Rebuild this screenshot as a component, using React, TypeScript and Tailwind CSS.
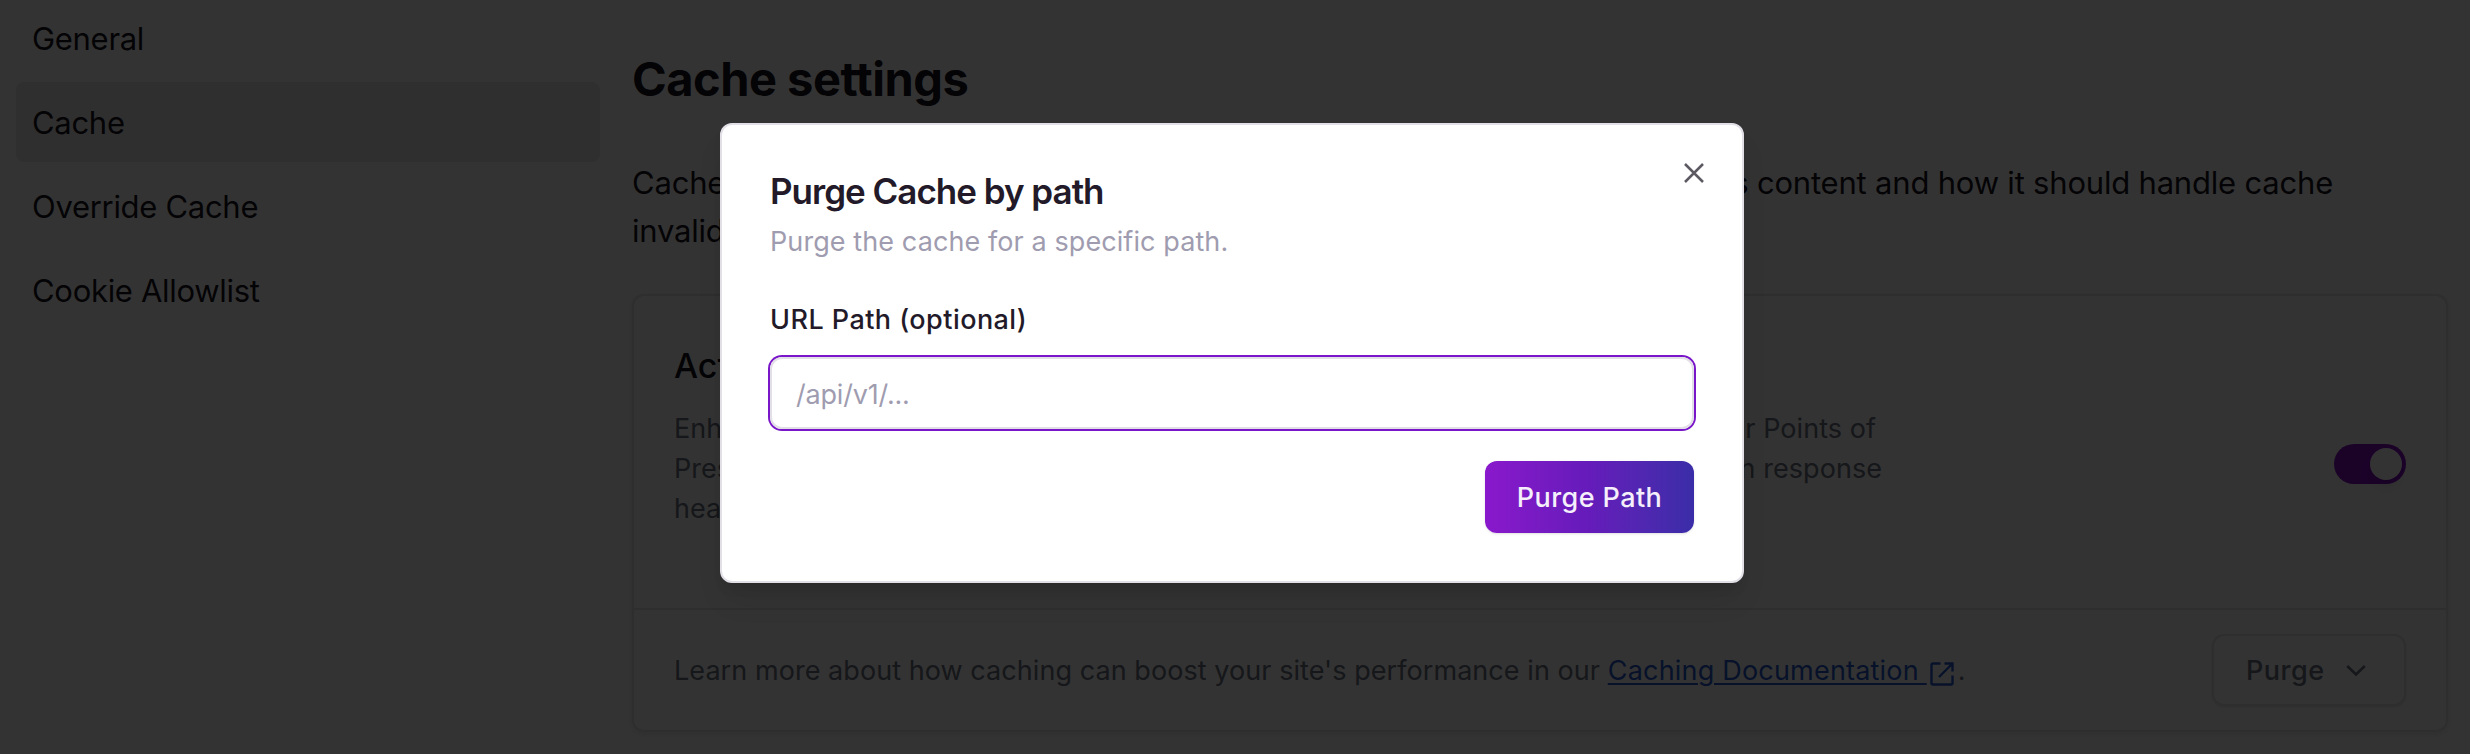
import React from "react";

const navItems = [
  { label: "General", active: false },
  { label: "Cache", active: true },
  { label: "Override Cache", active: false },
  { label: "Cookie Allowlist", active: false },
];

function Sidebar() {
  return (
    <nav className="-mt-0.5 flex w-[584px] shrink-0 flex-col gap-1 tracking-[-0.3px]">
      {navItems.map((item) => (
        <a
          key={item.label}
          className={
            item.active
              ? "flex h-20 items-center rounded-lg bg-[#ebebeb] px-4 pt-[3px]"
              : "flex h-20 items-center rounded-lg px-4 pt-[3px]"
          }
        >
          {item.label}
        </a>
      ))}
    </nav>
  );
}

function SplitLine({ start, end }: { start: string; end: string }) {
  return (
    <span className="flex justify-between whitespace-nowrap">
      <span>{start}</span>
      <span>{end}</span>
    </span>
  );
}

function ExternalIcon() {
  return (
    <svg className="mt-1 ml-[3px] size-6" viewBox="0 0 24 24" fill="none" stroke="currentColor" strokeWidth="2.4">
      <path d="M10.500 1.500H3A1.500 1.500 0 0 0 1.500 3v18A1.500 1.500 0 0 0 3 22.500h18a1.500 1.500 0 0 0 1.500-1.500v-7.500M14.500 1.500h8v8M22.500 1.500 9 15" />
    </svg>
  );
}

function CacheCard() {
  return (
    <section className="mt-[39px] flex h-[438px] flex-col rounded-xl border-2 border-[#e4e4e7] shadow-[0_2px_6px_rgba(0,0,0,0.1)]">
      <div className="flex flex-1 items-center justify-between border-b-2 border-[#e4e4e7] px-10">
        <div className="-mt-1 h-[220px] w-[1210px]">
          <h2 className="text-[34px] leading-[52px] font-medium">Act</h2>
          <p className="mt-[17px] text-[27px] leading-10 tracking-[0.05px] text-[#6b7280]">
            <span className="block w-[1202px]"><SplitLine start="Enha" end="our Points of" /></span>
            <span className="block w-[1208px]"><SplitLine start="Pres" end="in response" /></span>
            <span className="block">head</span>
          </p>
        </div>
        <span className="mt-6 flex h-10 w-[72px] items-center justify-end rounded-full bg-[#850fc8] p-1">
          <span className="size-8 rounded-full bg-white shadow-lg" />
        </span>
      </div>
      <div className="flex h-[120px] items-center justify-between px-10">
        <p className="flex items-center pt-[3px] text-[27px] tracking-[0.06px] whitespace-pre text-[#6b7280]">
          <span>Learn more about how caching can boost your site's performance in our </span>
          <a className="flex items-center tracking-[0.2px] text-[#245bd0]">
            <span className="underline decoration-2 underline-offset-[3px]">Caching Documentation </span>
            <ExternalIcon />
          </a>
          <span className="ml-1">.</span>
        </p>
        <button className="flex h-[72px] w-[194px] items-center justify-between rounded-xl border-2 border-[#e4e4e7] pr-9 pl-8 text-[27px] font-medium tracking-[0.5px] text-[#6b7280] shadow-sm">
          <span className="pt-0.5">Purge</span>
          <svg className="h-6 w-6" viewBox="0 0 24 24" fill="none" stroke="currentColor" strokeWidth="2.6">
            <path d="m3.200 8 8.800 8.500L20.800 8" />
          </svg>
        </button>
      </div>
    </section>
  );
}

function PurgeDialog() {
  return (
    <div className="relative flex h-[460px] w-[1024px] flex-col rounded-xl border-2 border-[#e2dfe7] bg-white px-12 pt-12 text-[27px] text-[#231a29] shadow-[0_20px_30px_-6px_rgba(0,0,0,0.1),0_8px_12px_-4px_rgba(0,0,0,0.1)]">
      <button className="absolute top-8 right-8 flex size-8 items-center justify-center text-[#5d5962]">
        <svg className="size-8" viewBox="0 0 32 32" fill="none" stroke="currentColor" strokeWidth="2.5">
          <path d="m7 7 18 18M25 7 7 25" />
        </svg>
      </button>
      <h2 className="text-[35px] leading-9 font-semibold tracking-[-1px]">Purge Cache by path</h2>
      <p className="mt-[13px] leading-10 tracking-[0.09px] text-[#a09cb0]">Purge the cache for a specific path.</p>
      <label className="mt-11 leading-7 font-medium tracking-[0.45px]">URL Path (optional)</label>
      <input
        className="mt-[23px] h-[72px] rounded-xl border-2 border-[#e2dfe7] px-6 pt-0.5 tracking-[-0.2px] ring-2 ring-[#7a16c9] outline-none placeholder:text-[#a09cb0]"
        placeholder="/api/v1/..."
      />
      <button className="mt-8 flex h-[72px] w-[209px] items-center justify-center self-end rounded-xl bg-linear-to-r from-[#8a18cc] via-[#651bba] to-[#3a2da8] pt-0.5 font-medium tracking-[0.4px] text-[#f4effa] shadow-sm">
        Purge Path
      </button>
    </div>
  );
}

export default function App() {
  return (
    <div className="relative h-[754px] w-[2470px] overflow-hidden bg-white font-['Inter',sans-serif] text-[31px] text-[#18121c]">
      <div className="flex pr-[22px] pl-4">
        <Sidebar />
        <main className="ml-8 flex-1">
          <h1 className="mt-[49px] text-[47px] leading-[60px] font-bold tracking-[-0.5px]">Cache settings</h1>
          <p className="mt-[50px] w-[1701px] leading-[48px] tracking-[-0.2px]">
            <SplitLine start="Cache" end="its content and how it should handle cache" />
            <span className="block">invalid</span>
          </p>
          <CacheCard />
        </main>
      </div>
      <div className="absolute inset-0 flex items-start bg-black/80 pt-[123px] pl-[720px]">
        <PurgeDialog />
      </div>
    </div>
  );
}
